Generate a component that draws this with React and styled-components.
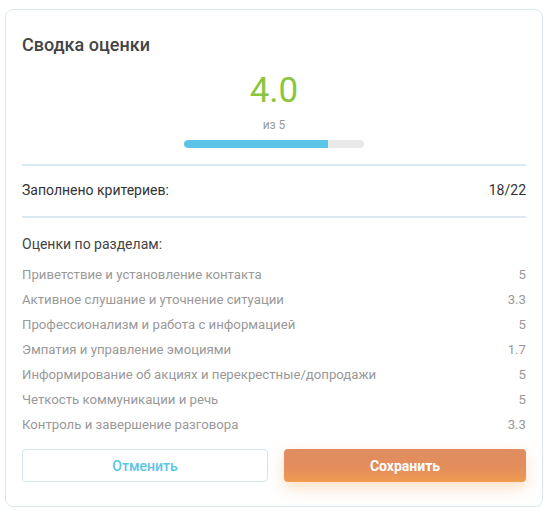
import React from 'react'
import styled, { createGlobalStyle } from 'styled-components'

const sections = [
  { name: 'Приветствие и установление контакта', score: '5' },
  { name: 'Активное слушание и уточнение ситуации', score: '3.3' },
  { name: 'Профессионализм и работа с информацией', score: '5' },
  { name: 'Эмпатия и управление эмоциями', score: '1.7' },
  { name: 'Информирование об акциях и перекрестные/допродажи', score: '5' },
  { name: 'Четкость коммуникации и речь', score: '5' },
  { name: 'Контроль и завершение разговора', score: '3.3' },
]

export default function App() {
  const score = 4.0
  return (
    <>
      <GlobalStyle />
      <Card>
        <Title>Сводка оценки</Title>
        <ScoreBlock>
          <ScoreValue>{score.toFixed(1)}</ScoreValue>
          <ScoreMax>из 5</ScoreMax>
          <Track>
            <Fill style={{ width: `${(score / 5) * 100}%` }} />
          </Track>
        </ScoreBlock>
        <FilledRow>
          <span>Заполнено критериев:</span>
          <span>18/22</span>
        </FilledRow>
        <Sections>
          <SectionsTitle>Оценки по разделам:</SectionsTitle>
          {sections.map((s) => (
            <SectionRow key={s.name}>
              <span>{s.name}</span>
              <span>{s.score}</span>
            </SectionRow>
          ))}
        </Sections>
        <Actions>
          <CancelBtn type="button">Отменить</CancelBtn>
          <SaveBtn type="button">Сохранить</SaveBtn>
        </Actions>
      </Card>
    </>
  )
}

const GlobalStyle = createGlobalStyle`
  body {
    margin: 0;
    background: #fff;
    font-family: Roboto, "Noto Sans", Arial, sans-serif;
  }
  * { box-sizing: border-box; }
`

const Card = styled.div`
  width: 538px;
  margin: 9px 0 0 5px;
  padding: 24px 16px 24px;
  border: 1px solid #dae7ee;
  border-radius: 8px;
  background: #fff;
`

const Title = styled.h2`
  margin: 0;
  font-size: 18px;
  line-height: 21px;
  font-weight: 500;
  color: #444;
`

const ScoreBlock = styled.div`
  display: flex;
  flex-direction: column;
  align-items: center;
  margin-top: 15px;
  padding-bottom: 16px;
  border-bottom: 2px solid #dbeaf0;
`

const ScoreValue = styled.div`
  font-size: 35px;
  line-height: 41px;
  font-weight: 400;
  color: #8cc63f;
`

const ScoreMax = styled.div`
  margin-top: 7px;
  font-size: 12px;
  line-height: 14px;
  color: #999;
`

const Track = styled.div`
  width: 180px;
  height: 8px;
  margin-top: 8px;
  border-radius: 4px;
  background: #e9e9e9;
  overflow: hidden;
`

const Fill = styled.div`
  height: 100%;
  border-radius: 4px 0 0 4px;
  background: #5bc5e8;
`

const FilledRow = styled.div`
  display: flex;
  justify-content: space-between;
  padding: 14px 0 16px;
  font-size: 14px;
  line-height: 20px;
  color: #333;
  border-bottom: 2px solid #dbeaf0;
`

const Sections = styled.div`
  padding-top: 16px;
`

const SectionsTitle = styled.div`
  font-size: 14px;
  line-height: 20px;
  color: #444;
  margin-bottom: 8px;
`

const SectionRow = styled.div`
  display: flex;
  justify-content: space-between;
  font-size: 13.2px;
  line-height: 25px;
  color: #999;
`

const Actions = styled.div`
  display: grid;
  grid-template-columns: 246px 1fr;
  gap: 16px;
  margin-top: 12px;
`

const CancelBtn = styled.button`
  height: 33px;
  border: 1px solid #d3e6ee;
  border-radius: 4px;
  background: #fff;
  font-family: inherit;
  font-size: 14px;
  font-weight: 500;
  color: #5bc5e8;
  cursor: pointer;
`

const SaveBtn = styled.button`
  height: 33px;
  border: none;
  border-radius: 4px;
  background: linear-gradient(180deg, #e08c60 0%, #e48e5c 60%, #f09c50 100%);
  box-shadow: 0 6px 16px rgba(245, 160, 90, 0.35);
  font-family: inherit;
  font-size: 14px;
  font-weight: 700;
  color: #fff;
  cursor: pointer;
`
